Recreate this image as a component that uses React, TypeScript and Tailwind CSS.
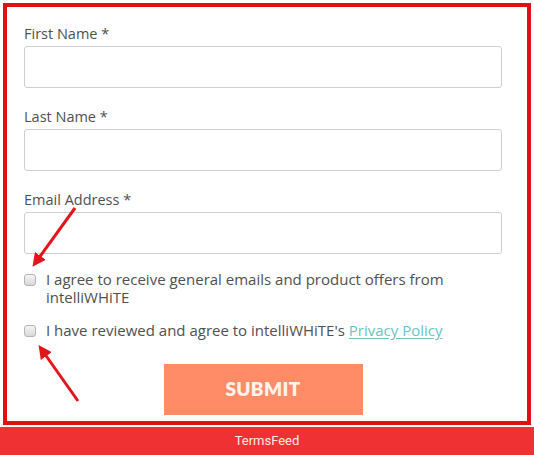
import React from "react";

function Field({ label }: { label: string }) {
  return (
    <div className="mb-[19px] flex flex-col">
      <label className="h-5 text-[14.5px] leading-5 text-[#505050]">{label}</label>
      <input
        type="text"
        className="mt-[2px] h-[42px] w-full rounded-[3px] border border-[#cfcfcf] bg-white outline-none"
      />
    </div>
  );
}

function Box() {
  return (
    <span className="mt-[4px] h-[12px] w-[12px] shrink-0 rounded-[3px] border border-[#b5b5b5] bg-gradient-to-b from-[#f4f4f4] to-[#d9d9d9]" />
  );
}

export default function App() {
  return (
    <div
      className="relative h-[455px] w-[534px] overflow-hidden bg-white"
      style={{ fontFamily: "'Open Sans', Lato, sans-serif" }}
    >
      <div className="mx-[3px] mt-[3px] h-[422px] border-4 border-[#df1016] pl-[17px] pr-[25px] pt-[17px]">
        <Field label="First Name *" />
        <Field label="Last Name *" />
        <Field label="Email Address *" />

        <div className="-mt-[3px] flex gap-[10px] text-[15px] leading-[18px] text-[#505050]">
          <Box />
          <p>
            I agree to receive general emails and product offers from
            <br />
            intelliWHiTE
          </p>
        </div>

        <div className="mt-[15px] flex gap-[10px] text-[15px] leading-[18px] text-[#505050]">
          <Box />
          <p>
            I have reviewed and agree to intelliWHiTE's{" "}
            <a className="text-[#6cc3c3] underline underline-offset-2">Privacy Policy</a>
          </p>
        </div>

        <div className="mt-[25px] flex justify-center">
          <button
            className="h-[51px] w-[199px] bg-[#ff8b67] text-[19px] font-extrabold tracking-[0.3px] text-[#fff3ea]"
            style={{ fontFamily: "Lato, sans-serif" }}
          >
            SUBMIT
          </button>
        </div>
      </div>

      <div
        className="mt-[2px] flex h-[28px] items-center justify-center bg-[#ef3134] text-[13px] text-[#fde9e9]"
        style={{ fontFamily: "Roboto, sans-serif" }}
      >
        TermsFeed
      </div>

      <svg className="pointer-events-none absolute left-0 top-0" width="534" height="455">
        <defs>
          <marker id="ah" markerWidth="4.5" markerHeight="4.5" refX="2.5" refY="2.25" orient="auto">
            <path d="M0,0 L4.5,2.25 L0,4.5 Z" fill="#e3151b" />
          </marker>
        </defs>
        <line x1="75" y1="208" x2="36" y2="262" stroke="#e3151b" strokeWidth="3" markerEnd="url(#ah)" />
        <line x1="78" y1="401" x2="42" y2="350" stroke="#e3151b" strokeWidth="3" markerEnd="url(#ah)" />
      </svg>
    </div>
  );
}
